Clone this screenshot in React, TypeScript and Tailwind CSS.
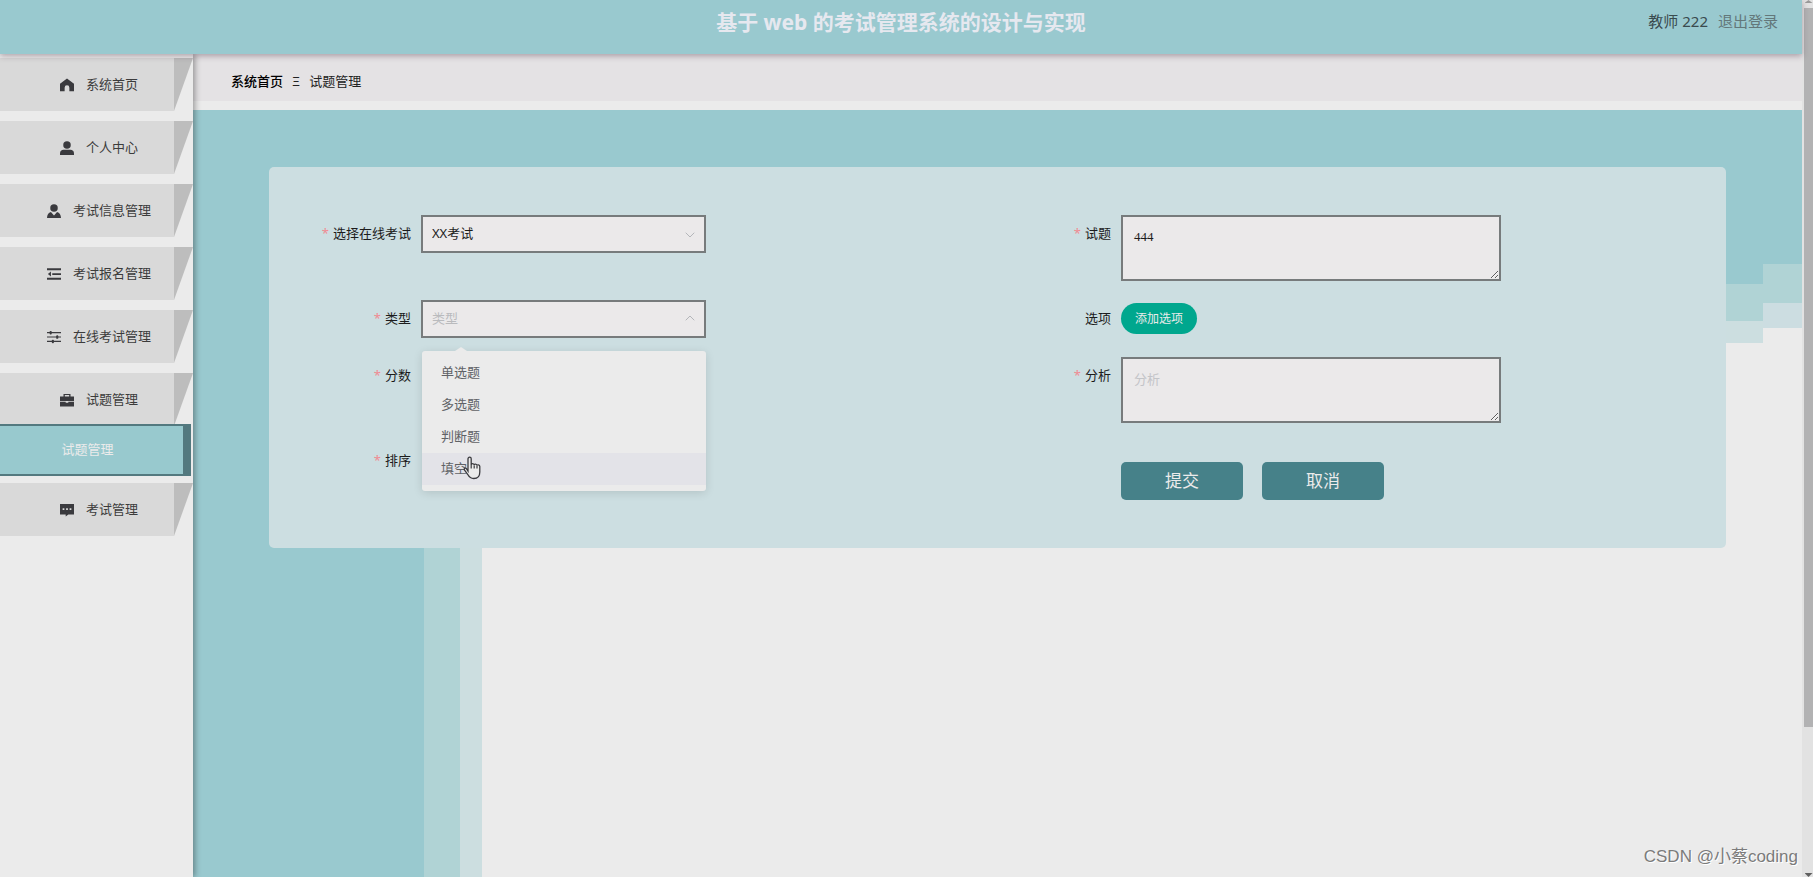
import { useState } from "react";
import type { ReactNode } from "react";
import { ChevronDown, ChevronUp } from "lucide-react";

const questionTypes = ["单选题", "多选题", "判断题", "填空"];

const menu: { label: string; icon: ReactNode; children?: string[] }[] = [
    {
        label: "系统首页",
        icon: <path d="M8 .5 0 6.5V15h5.3v-4a2.7 2.7 0 0 1 5.4 0v4H16V6.5z" />,
    },
    {
        label: "个人中心",
        icon: (
            <>
                <circle cx="8" cy="4.5" r="4.3" />
                <path d="M0 16v-2c0-2.500 1.800-4 4-4h8c2.200 0 4 1.500 4 4v2z" />
            </>
        ),
    },
    {
        label: "考试信息管理",
        icon: (
            <>
                <circle cx="8" cy="4.5" r="4.3" />
                <path d="M0 16c.2-4 1.600-6 4.500-7L8 13l3.500-4c2.900 1 4.300 3 4.500 7z" />
            </>
        ),
    },
    {
        label: "考试报名管理",
        icon: <path d="M0 1.500h16v2.200H0zM6 7h10v2H6zM0 12.300h16v2.200H0zM4.500 5.200v5.600L1 8z" />,
    },
    {
        label: "在线考试管理",
        icon: (
            <>
                <path d="M0 2.300h16v1.400H0zM0 7.300h16v1.400H0zM0 12.300h16v1.400H0z" />
                <rect x="3" y="1" width="2.4" height="4" rx="1" />
                <rect x="10.5" y="6" width="2.4" height="4" rx="1" />
                <rect x="5.5" y="11" width="2.4" height="4" rx="1" />
            </>
        ),
    },
    {
        label: "试题管理",
        icon: (
            <path
                fillRule="evenodd"
                d="M4 4V1h8v3h4v5H0V4zM5.500 4h5V2.300h-5zM0 10h6.500v1.200h3V10H16v5.500H0z"
            />
        ),
        children: ["试题管理"],
    },
    {
        label: "考试管理",
        icon: (
            <path
                fillRule="evenodd"
                d="M0 1h16v12H9.500l-3 2.500V13H0zM3 6v2h2V6zM7 6v2h2V6zM11 6v2h2V6z"
            />
        ),
    },
];

function Sidebar() {
    return (
        <nav className="relative z-10 w-[193px] shrink-0 bg-[#ebebeb] pt-1 shadow-[2px_0_6px_rgba(0,0,0,0.35)]">
            <ul>
                {menu.map((item) => (
                    <li key={item.label} className={item.children ? "mb-[7px]" : "mb-2.5"}>
                        <a href="#" className="relative flex h-[53px] items-center justify-center gap-3 pl-[5px] text-[13px] text-[#3c3c3c]">
                            <span className="absolute inset-y-0 left-0 right-[19px] bg-[#d9d9d9]" />
                            <span className="absolute inset-y-0 right-0 w-[19px] bg-[#bdbdbd] [clip-path:polygon(0_0,100%_0,0_100%)]" />
                            <svg viewBox="0 0 16 16" className="relative size-3.5 fill-[#3a3a3e]" aria-hidden="true">
                                {item.icon}
                            </svg>
                            <span className="relative">{item.label}</span>
                        </a>
                        {item.children?.map((child) => (
                            <a
                                key={child}
                                href="#"
                                className="relative -mt-0.5 mr-0.5 flex h-[52px] items-center justify-center border-y-2 border-r-8 border-[#53797f] bg-[#98c9ce] pr-2 text-[13px] text-[#ebebeb]"
                            >
                                {child}
                            </a>
                        ))}
                    </li>
                ))}
            </ul>
        </nav>
    );
}

function Backdrop() {
    return (
        <div className="absolute inset-0 flex bg-[#ebebeb]" aria-hidden="true">
            <div className="w-[231px] bg-[#99c9cf]" />
            <div className="w-9 bg-[#b0d3d5]">
                <div className="h-[174px] bg-[#99c9cf]" />
            </div>
            <div className="w-[22px] bg-[#ccdee0]">
                <div className="h-[174px] bg-[#99c9cf]" />
            </div>
            <div className="flex-1">
                <div className="h-[174px] bg-[#99c9cf]" />
                <div className="h-[37px] bg-[#b0d3d5]" />
                <div className="h-[22px] bg-[#ccdee0]" />
            </div>
            <div className="w-[39px]">
                <div className="h-[154px] bg-[#99c9cf]" />
                <div className="h-[39px] bg-[#b0d3d5]" />
                <div className="h-[25px] bg-[#ccdde1]" />
            </div>
        </div>
    );
}

function Field({ id, label, required, children }: { id: string; label: string; required?: boolean; children: ReactNode }) {
    return (
        <div className="flex items-start">
            <label htmlFor={id} className="mr-2.5 w-[114px] shrink-0 text-right leading-[37px]">
                {required && <span className="mr-1 text-[#f08a92]">*</span>}
                {label}
            </label>
            {children}
        </div>
    );
}

const box = "border-2 border-[#777b7c] bg-[#ebe9ea] outline-none";

function HandCursor() {
    return (
        <svg viewBox="0 0 18 24" className="pointer-events-none absolute left-[41px] top-[3px] h-6 w-[18px]" aria-hidden="true">
            <path
                d="M5 15V2.800a1.600 1.600 0 0 1 3.200 0V9c0-2 3-1.800 3 .2 0-1.600 2.800-1.500 2.800.5 0-1.400 2.800-1.200 2.800.8V16c0 4-2.300 6.500-6 6.500-3 0-4.600-1.400-6-4L1.400 14c-.8-1.600 1-2.600 2-1.400z"
                fill="#ebebeb"
                stroke="#3b3b3f"
                strokeWidth="1.3"
            />
            <path d="M8.200 9v3.500M11.200 9.500v3M14 10v2.500" stroke="#3b3b3f" strokeWidth="1.2" />
        </svg>
    );
}

function QuestionForm() {
    const [type, setType] = useState("");
    const [question, setQuestion] = useState("444");
    const [open, setOpen] = useState(true);

    function choose(value: string) {
        setType(value);
        setOpen(false);
    }

    return (
        <form
            className="relative rounded-[5px] bg-[#ccdee1] py-12 pl-7 pr-[29px] text-[13px] text-[#1c1c1c]"
            onSubmit={(e) => e.preventDefault()}
        >
            <div className="grid grid-cols-2 gap-y-[19px]">
                <Field id="exam" label="选择在线考试" required>
                    <div className="relative w-[285px]">
                        <select id="exam" className={`${box} h-[38px] w-full appearance-none px-[9px]`}>
                            <option>XX考试</option>
                        </select>
                        <ChevronDown className="pointer-events-none absolute right-2 top-3 size-4 text-[#b4b6ba]" strokeWidth={1.5} />
                    </div>
                </Field>
                <Field id="question" label="试题" required>
                    <textarea
                        id="question"
                        className={`${box} block h-[66px] w-[380px] px-[11px] py-2.5 font-['Liberation_Serif','Noto_Sans_CJK_SC',serif] leading-5`}
                        value={question}
                        onChange={(e) => setQuestion(e.target.value)}
                    />
                </Field>

                <Field id="type" label="类型" required>
                    <div className="relative w-[285px]">
                        <select
                            id="type"
                            className={`${box} h-[38px] w-full appearance-none px-[9px] ${type ? "" : "text-[#b9babd]"}`}
                            value={type}
                            onChange={(e) => setType(e.target.value)}
                        >
                            <option value="">类型</option>
                            {questionTypes.map((t) => (
                                <option key={t}>{t}</option>
                            ))}
                        </select>
                        <ChevronUp className="pointer-events-none absolute right-2 top-2.5 size-4 text-[#b4b6ba]" strokeWidth={1.5} />
                        {open && (
                            <div className="absolute left-px right-0 top-[51px] z-10 rounded-[3px] bg-[#ebebeb] py-1.5 shadow-[0_2px_10px_rgba(0,0,0,0.12)]">
                                <span className="absolute -top-1 left-[33px] h-1 w-3 bg-[#ebebeb] [clip-path:polygon(50%_0,100%_100%,0_100%)]" />
                                {questionTypes.map((t, i) => (
                                    <div key={t} className="relative">
                                        <button
                                            type="button"
                                            onClick={() => choose(t)}
                                            className={`block h-8 w-full px-[19px] text-left text-[#606266] ${i === 3 ? "bg-[#e3e3e8]" : ""}`}
                                        >
                                            {t}
                                        </button>
                                        {i === 3 && <HandCursor />}
                                    </div>
                                ))}
                            </div>
                        )}
                    </div>
                </Field>
                <Field id="options" label="选项">
                    <div className="flex h-[37px] items-center">
                        <button id="options" type="button" className="h-[31px] w-[76px] rounded-full bg-[#00a78e] text-[12px] text-[#ebebeb]">
                            添加选项
                        </button>
                    </div>
                </Field>

                <Field id="score" label="分数" required>
                    <div className="w-[284px] px-1">
                        <input id="score" className={`${box} h-[34px] w-full px-[9px]`} />
                    </div>
                </Field>
                <Field id="analysis" label="分析" required>
                    <textarea
                        id="analysis"
                        className={`${box} block h-[66px] w-[380px] px-[11px] py-2.5 leading-5 placeholder:text-[#c3c4c8]`}
                        placeholder="分析"
                    />
                </Field>

                <Field id="order" label="排序" required>
                    <div className="w-[284px] px-1">
                        <input id="order" className={`${box} h-[34px] w-full px-[9px]`} />
                    </div>
                </Field>
                <div className="flex gap-[19px] pl-[124px] pt-5">
                    <button type="submit" className="h-[38px] w-[122px] rounded-[5px] bg-[#468189] text-[17px] text-[#ebebeb]">
                        提交
                    </button>
                    <button type="button" className="h-[38px] w-[122px] rounded-[5px] bg-[#468189] text-[17px] text-[#ebebeb]">
                        取消
                    </button>
                </div>
            </div>
        </form>
    );
}

function ScrollTrack() {
    return (
        <div className="flex w-[11px] shrink-0 flex-col items-end bg-[#e2e2e2]" aria-hidden="true">
            <div className="flex h-2 w-[9px] justify-center">
                <span className="h-[3px] w-2 bg-[#9a9a9a] [clip-path:polygon(50%_0,100%_100%,0_100%)]" />
            </div>
            <div className="h-[82%] w-[9px] bg-[#b2b2b3]" />
            <div className="flex w-[9px] flex-1 items-end justify-center">
                <span className="h-1 w-2 bg-[#606060] [clip-path:polygon(0_0,100%_0,50%_100%)]" />
            </div>
        </div>
    );
}

export default function App() {
    return (
        <div className="flex h-screen overflow-hidden bg-[#ebebeb] font-['Noto_Sans','Noto_Sans_CJK_SC',sans-serif]">
            <div className="relative flex min-w-0 flex-1 flex-col">
                <header className="relative z-20 grid h-[54px] shrink-0 grid-cols-[1fr_auto_1fr] bg-[#99c9cf] shadow-[0_2px_6px_rgba(60,30,50,0.35)]">
                    <h1 className="col-start-2 text-[21px] font-bold leading-[45px] text-[#e6e8ef]">基于 web 的考试管理系统的设计与实现</h1>
                    <div className="flex justify-end gap-2.5 pr-6 text-[15px] leading-[42px]">
                        <span className="text-[#3a4b4e]">教师 222</span>
                        <a href="#" className="text-[#63777a]">退出登录</a>
                    </div>
                </header>

                <div className="flex min-h-0 flex-1">
                    <Sidebar />
                    <main className="flex min-w-0 flex-1 flex-col">
                        <nav className="mb-[9px] flex h-[47px] shrink-0 items-center gap-[9px] bg-[#e4e2e4] pl-[38px] pt-2 text-[13px] text-[#222]">
                            <a href="#" className="font-medium text-black">系统首页</a>
                            <span>Ξ</span>
                            <span>试题管理</span>
                        </nav>
                        <section className="relative flex-1 px-[76px] pt-[57px]">
                            <Backdrop />
                            <QuestionForm />
                        </section>
                    </main>
                </div>

                <div className="absolute bottom-2 right-1 z-20 font-['Liberation_Sans','Noto_Sans_CJK_SC',sans-serif] text-[17px] leading-6 text-[#7b7b7b] [text-shadow:1px_1px_0_#fff]">
                    CSDN @小蔡coding
                </div>
            </div>
            <ScrollTrack />
        </div>
    );
}
